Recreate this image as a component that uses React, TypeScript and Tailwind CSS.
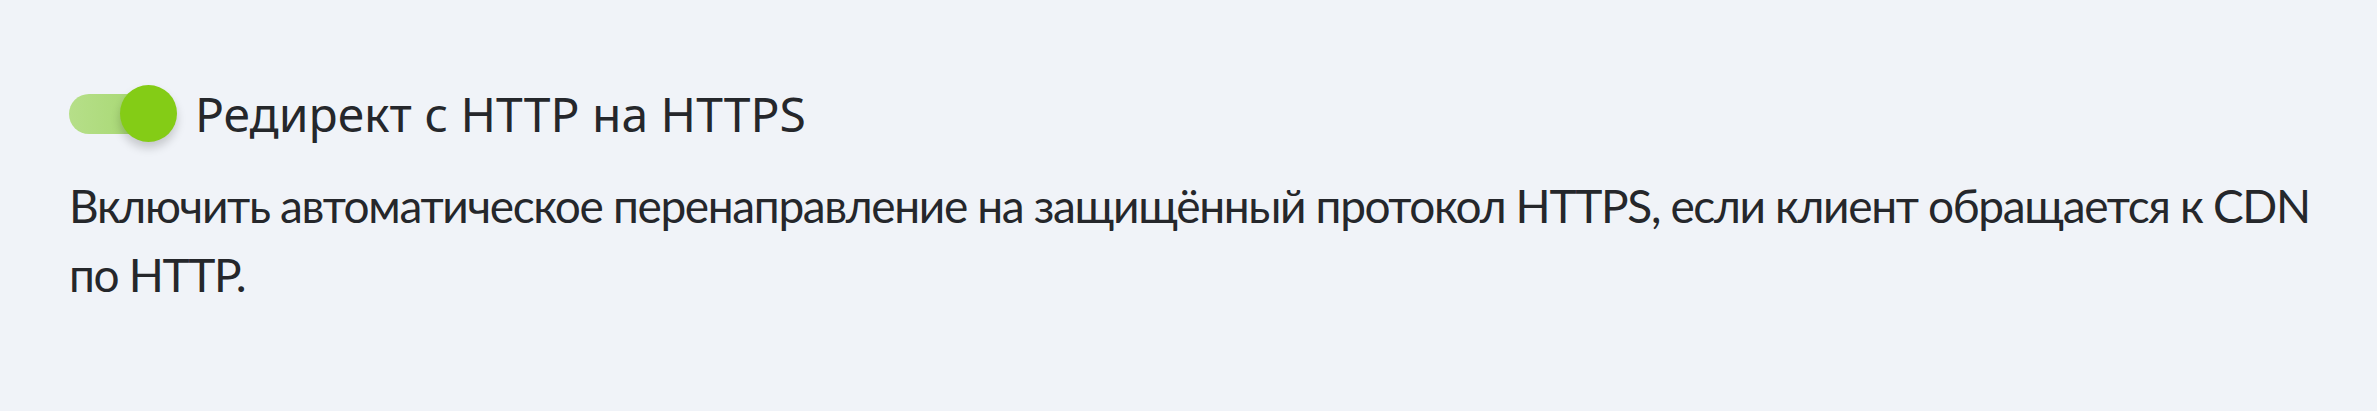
import { useState } from 'react'

export default function App() {
  const [enabled, setEnabled] = useState(true)

  return (
    <div className="min-h-[411px] bg-[#f0f3f8] pl-[69px] pr-[50px] pt-[82px] text-[#25272b]">
      <div className="flex items-center gap-[18px]">
        <Toggle checked={enabled} onChange={() => setEnabled(v => !v)} />
        <h3 className="text-[48px] leading-[63px] font-['Noto_Sans',sans-serif] font-normal">
          Редирект с HTTP на HTTPS
        </h3>
      </div>
      <p className="mt-[26px] text-[46px] leading-[69px] tracking-[-1.35px] font-['Lato',sans-serif]">
        Включить автоматическое перенаправление на защищённый протокол HTTPS, если клиент обращается к CDN по HTTP.
      </p>
    </div>
  )
}

function Toggle({ checked, onChange }: { checked: boolean; onChange: () => void }) {
  return (
    <button
      type="button"
      onClick={onChange}
      className="relative flex h-[57px] w-[108px] shrink-0 items-center"
    >
      <span className="h-[40px] w-[100px] rounded-full bg-gradient-to-r from-[#b6df89] to-[#a2d56a]" />
      <span
        className={`absolute top-0 h-[57px] w-[57px] rounded-full bg-[#84cc16] shadow-[0_6px_10px_rgba(0,0,0,0.18)] ${checked ? 'right-0' : 'left-0'}`}
      />
    </button>
  )
}
